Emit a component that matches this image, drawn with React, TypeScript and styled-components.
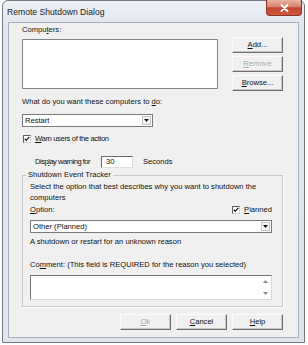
import React from "react";
import styled, { createGlobalStyle } from "styled-components";

const Global = createGlobalStyle`
  html, body { margin: 0; padding: 0; background: #ffffff; }
  body { font-family: "Liberation Sans", Arial, sans-serif; color: #111111; }
  * { box-sizing: border-box; }
`;

const Window = styled.div`
  margin-left: 2px;
  width: 303px;
  height: 343px;
  border: 1px solid #6f7983;
  border-radius: 6px 6px 0 0;
  background: linear-gradient(#eef2f6, #e2e8ee 22px, #dfe5eb);
  padding: 0 5px 4px 5px;
  display: flex;
  flex-direction: column;
`;

const TitleBar = styled.div`
  height: 21px;
  display: flex;
  align-items: flex-start;
  justify-content: space-between;
`;

const Title = styled.div`
  margin-left: -1px;
  font-size: 8.6px;
  line-height: 22px;
  color: #1a1a1a;
`;

const CloseButton = styled.div`
  margin-top: -1px;
  margin-right: -3px;
  width: 36px;
  height: 16px;
  border: 1px solid #8a3328;
  border-top: none;
  border-radius: 0 0 4px 4px;
  background: linear-gradient(#eab3a6, #d9826f 45%, #c6452f 52%, #d15a41);
  display: flex;
  align-items: center;
  justify-content: center;
`;

const Client = styled.div`
  flex: 1;
  border: 1px solid #a7b0ba;
  background: #f0f0f0;
  padding: 2px 15px 0 13px;
  display: flex;
  flex-direction: column;
  font-size: 7.6px;
`;

const Label = styled.div<{ $mt?: number }>`
  margin-top: ${(p) => p.$mt ?? 0}px;
  line-height: 10px;
  white-space: nowrap;
`;

const Key = styled.u`
  text-decoration-thickness: 1px;
  text-underline-offset: 1px;
`;

const TopRow = styled.div`
  margin-top: 2px;
  display: flex;
  align-items: flex-start;
`;

const ListBox = styled.div`
  margin-top: 2px;
  width: 196px;
  height: 50px;
  border: 1px solid #7f858d;
  background: #ffffff;
`;

const ButtonColumn = styled.div`
  margin-left: 14px;
  display: flex;
  flex-direction: column;
  gap: 3px;
`;

const Button = styled.div<{ $disabled?: boolean }>`
  width: 51px;
  height: 16px;
  border: 1px solid;
  border-color: #fbfbfb #6e6e6e #6e6e6e #fbfbfb;
  box-shadow: inset -1px -1px 0 #c9c9c9;
  background: #f0f0f0;
  display: flex;
  align-items: center;
  justify-content: center;
  line-height: 10px;
  color: ${(p) => (p.$disabled ? "#a3a3a3" : "#111111")};
  text-shadow: ${(p) => (p.$disabled ? "1px 1px 0 #ffffff" : "none")};
`;

const Select = styled.div<{ $mt: number; $width?: number }>`
  margin-top: ${(p) => p.$mt}px;
  width: ${(p) => (p.$width ? `${p.$width}px` : "100%")};
  height: 13px;
  border: 1px solid #7a7a7a;
  background: #ffffff;
  display: flex;
  align-items: center;
  justify-content: space-between;
  padding: 0 1px 0 2px;
  line-height: 10px;
`;

const ArrowBox = styled.div`
  width: 9px;
  height: 9px;
  border: 1px solid #c4c4c4;
  background: #f6f6f6;
  display: flex;
  align-items: center;
  justify-content: center;
`;

const CheckRow = styled.div<{ $mt?: number; $tight?: boolean }>`
  margin-top: ${(p) => p.$mt ?? 0}px;
  display: flex;
  align-items: center;
  gap: 4px;
  height: 10px;
  line-height: 10px;
  white-space: nowrap;
  letter-spacing: ${(p) => (p.$tight ? "-0.35px" : "normal")};
`;

const CheckBox = styled.div<{ $ml?: number }>`
  margin-left: ${(p) => p.$ml ?? 0}px;
  width: 8px;
  height: 8px;
  border: 1px solid;
  border-color: #5e5e5e #d0d0d0 #d0d0d0 #5e5e5e;
  background: #ffffff;
  display: flex;
  align-items: center;
  justify-content: center;
`;

const DisplayRow = styled.div`
  margin-top: 12px;
  padding-left: 13px;
  height: 12px;
  display: grid;
  grid-template-columns: 56px 32px auto;
  column-gap: 10px;
  align-items: center;
  line-height: 10px;
  white-space: nowrap;
`;

const TightText = styled.span`
  letter-spacing: -0.5px;
`;

const NumberField = styled.div`
  height: 12px;
  border: 1px solid;
  border-color: #6a6a6a #e0e0e0 #e0e0e0 #6a6a6a;
  background: #ffffff;
  padding-left: 4px;
  line-height: 10px;
`;

const Group = styled.fieldset`
  margin: 2px 0 0 0;
  padding: 1px 10px 6px 7px;
  border: 1px solid #c7c7c7;
  box-shadow: 1px 1px 0 #ffffff;
  display: flex;
  flex-direction: column;
  min-width: 0;
`;

const Legend = styled.legend`
  margin-left: -4px;
  padding: 0 2px;
  line-height: 10px;
  font-size: 7.6px;
`;

const Paragraph = styled.div`
  line-height: 11px;
  white-space: nowrap;
`;

const OptionRow = styled.div`
  margin-top: 2px;
  height: 10px;
  display: flex;
  align-items: center;
  justify-content: space-between;
  line-height: 10px;
`;

const TextArea = styled.div`
  margin-top: 5px;
  height: 25px;
  border: 1px solid;
  border-color: #737373 #d8d8d8 #d8d8d8 #737373;
  background: #ffffff;
  display: flex;
  justify-content: flex-end;
  padding: 0 1px;
`;

const ScrollBar = styled.div`
  width: 9px;
  display: flex;
  flex-direction: column;
`;

const ScrollArrow = styled.div`
  flex: 1;
  display: flex;
  align-items: center;
  justify-content: center;
`;

const Footer = styled.div`
  margin-top: 7px;
  display: flex;
  justify-content: flex-end;
  gap: 5px;
`;

const DownArrow = () => (
  <svg width="5" height="3" viewBox="0 0 5 3">
    <path d="M0 0 H5 L2.5 3 Z" fill="#111" />
  </svg>
);

const Check = () => (
  <svg width="6" height="6" viewBox="0 0 6 6">
    <path d="M0.8 2.8 L2.3 4.4 L5.3 0.9" stroke="#1a1a1a" strokeWidth="1.3" fill="none" />
  </svg>
);

const ScrollGlyph = ({ up }: { up?: boolean }) => (
  <svg width="5" height="3" viewBox="0 0 5 3">
    <path d={up ? "M0 3 H5 L2.5 0 Z" : "M0 0 H5 L2.5 3 Z"} fill="#8a8a8a" />
  </svg>
);

export default function App() {
  return (
    <>
      <Global />
      <Window>
        <TitleBar>
          <Title>Remote Shutdown Dialog</Title>
          <CloseButton>
            <svg width="9" height="8" viewBox="0 0 9 8">
              <path d="M1.5 1 L7.5 7 M7.5 1 L1.5 7" stroke="#ffffff" strokeWidth="1.8" strokeLinecap="round" />
            </svg>
          </CloseButton>
        </TitleBar>
        <Client>
          <Label>
            Compu<Key>t</Key>ers:
          </Label>
          <TopRow>
            <ListBox />
            <ButtonColumn>
              <Button>
                <Key>A</Key>dd...
              </Button>
              <Button $disabled>
                <Key>R</Key>emove
              </Button>
              <Button>
                <Key>B</Key>rowse...
              </Button>
            </ButtonColumn>
          </TopRow>
          <Label $mt={6}>
            What do you want these computers to <Key>d</Key>o:
          </Label>
          <Select $mt={7} $width={131}>
            <span>Restart</span>
            <ArrowBox>
              <DownArrow />
            </ArrowBox>
          </Select>
          <CheckRow $mt={7} $tight>
            <CheckBox $ml={1}>
              <Check />
            </CheckBox>
            <span>
              <Key>W</Key>arn users of the action
            </span>
          </CheckRow>
          <DisplayRow>
            <TightText>
              Disp<Key>l</Key>ay warning for
            </TightText>
            <NumberField>30</NumberField>
            <span>Seconds</span>
          </DisplayRow>
          <Group>
            <Legend>Shutdown Event Tracker</Legend>
            <Paragraph>
              Select the option that best describes why you want to shutdown the
              <br />
              computers
            </Paragraph>
            <OptionRow>
              <span>
                <Key>O</Key>ption:
              </span>
              <CheckRow>
                <CheckBox>
                  <Check />
                </CheckBox>
                <span>
                  <Key>P</Key>lanned
                </span>
              </CheckRow>
            </OptionRow>
            <Select $mt={5}>
              <span>Other (Planned)</span>
              <ArrowBox>
                <DownArrow />
              </ArrowBox>
            </Select>
            <Label $mt={4}>A shutdown or restart for an unknown reason</Label>
            <Label $mt={13}>
              Co<Key>m</Key>ment: (This field is REQUIRED for the reason you selected)
            </Label>
            <TextArea>
              <ScrollBar>
                <ScrollArrow>
                  <ScrollGlyph up />
                </ScrollArrow>
                <ScrollArrow>
                  <ScrollGlyph />
                </ScrollArrow>
              </ScrollBar>
            </TextArea>
          </Group>
          <Footer>
            <Button $disabled>
              <Key>O</Key>k
            </Button>
            <Button>
              <Key>C</Key>ancel
            </Button>
            <Button>
              <Key>H</Key>elp
            </Button>
          </Footer>
        </Client>
      </Window>
    </>
  );
}
